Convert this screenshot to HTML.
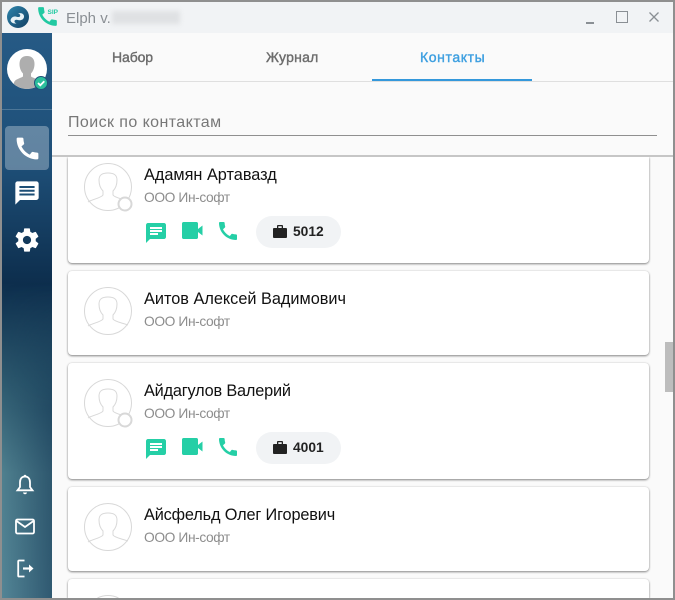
<!DOCTYPE html>
<html><head><meta charset="utf-8">
<style>
*{box-sizing:border-box}
html,body{margin:0;padding:0;width:675px;height:600px;overflow:hidden;background:#8f8f8f;font-family:"Liberation Sans",sans-serif}
.abs{position:absolute}
#win{position:absolute;left:2px;top:2px;width:671px;height:596px;overflow:hidden;background:#fafafa}
.t{position:absolute;white-space:nowrap}
.tab{font-size:14px;-webkit-text-stroke:.4px currentColor;color:#6c6c6c;top:47px}
.card{position:absolute;left:66px;width:581px;background:#fff;border-radius:4px;box-shadow:0 1px 2px rgba(0,0,0,.45),0 0 2px rgba(0,0,0,.1);overflow:hidden}
.name{position:absolute;left:76px;font-size:16.3px;color:#111;white-space:nowrap}
.org{position:absolute;left:76px;font-size:13.8px;letter-spacing:-.4px;color:#8d8d8d;white-space:nowrap}
.pill{position:absolute;left:188px;width:85px;height:32px;border-radius:16px;background:#f1f3f5;font-size:13.8px;font-weight:bold;color:#222}
</style></head><body>
<div id="win">
<!-- title bar -->
<div class="abs" style="left:0;top:0;width:671px;height:31px;background:#f1f3f5"></div>
<svg class="abs" style="left:5px;top:4px" width="22" height="22" viewBox="0 0 22 22"><defs><linearGradient id="lg" x1="0" y1="0" x2="1" y2="1"><stop offset="0" stop-color="#2f86ad"/><stop offset="1" stop-color="#123f63"/></linearGradient></defs><circle cx="11" cy="11" r="11" fill="url(#lg)"/><path d="M3.500 14.500c.5-3.500 3.500-4.500 6-3.800 2 .6 3.500.3 3.700-1 .2-1.200-.8-2-2.200-2 3-1.500 6.500.3 6 3.300-.4 2.800-3.500 3.800-6 3-1.800-.6-3.300-.2-3.500 1-.2 1.200.7 2 2 2.200-2.500 1-6.200-.6-6-3.700z" fill="#e8f2f6"/></svg>
<svg class="abs" style="left:33px;top:2px" width="25" height="25" viewBox="0 0 25 25"><path transform="scale(1.04)" d="M20.010 15.380c-1.230 0-2.420-.2-3.530-.56-.35-.12-.74-.03-1.010.24l-1.570 1.970c-2.830-1.350-5.480-3.900-6.890-6.830l1.950-1.660c.27-.28.35-.67.24-1.020-.37-1.110-.56-2.300-.56-3.530 0-.54-.45-.99-.99-.99H4.190C3.650 3 3 3.240 3 3.990 3 13.280 10.730 21 20.010 21c.71 0 .99-.63.99-1.180v-3.450c0-.54-.45-.99-.99-.99z" fill="#22c9a2"/><text x="12.500" y="10" font-family="Liberation Sans" font-size="6.500" font-weight="bold" fill="#22c9a2">SIP</text></svg>
<div class="t" style="left:64px;top:8px;font-size:15px;color:#8a8f94">Elph v.</div>
<div class="abs" style="left:110px;top:9px;width:68px;height:13px;background:#dfe1e3;filter:blur(2.500px)"></div>
<div class="abs" style="left:584px;top:20px;width:8px;height:1.500px;background:#8a8f94"></div>
<div class="abs" style="left:614px;top:9px;width:12px;height:12px;border:1.500px solid #8a8f94"></div>
<svg class="abs" style="left:647px;top:10px" width="10" height="10" viewBox="0 0 10 10"><path d="M.5.500l9 9M9.500.500l-9 9" stroke="#8a8f94" stroke-width="1.300" fill="none"/></svg>

<!-- sidebar -->
<div class="abs" style="left:0;top:31px;width:50px;height:565px;background:linear-gradient(180deg,#265a85 0,#1e4f78 130px,#0d2e4d 250px,#2d5a6f 350px,#4f808f 440px,#538596 565px)"></div>
<div class="abs" style="left:0;top:281px;width:50px;height:315px;background:linear-gradient(90deg,rgba(13,46,77,0),rgba(13,46,77,.5));-webkit-mask-image:linear-gradient(180deg,transparent,#000 40%)"></div>
<div class="abs" style="left:0;top:107px;width:50px;height:1px;background:rgba(255,255,255,.2)"></div>
<!-- avatar -->
<svg class="abs" style="left:5px;top:47px" width="42" height="42" viewBox="0 0 42 42"><defs><clipPath id="cc"><circle cx="20" cy="20" r="20"/></clipPath></defs><circle cx="20" cy="20" r="20" fill="#fff"/><g clip-path="url(#cc)"><path d="M20 7c-5 0-7.500 3-7.500 8 0 4 1.500 7.500 3.500 9.500v3c-3 2-8 2.500-9 6l-1 8h28l-1-8c-1-3.500-6-4-9-6v-3c2-2 3.500-5.500 3.500-9.500 0-5-2.500-8-7.500-8z" fill="#aeaeae"/></g><circle cx="34" cy="34" r="6.500" fill="#2bbf9c" stroke="#1f5278" stroke-width="1"/><path d="M31 34l2.300 2.300 4-4" stroke="#fff" stroke-width="1.800" fill="none"/></svg>
<!-- nav -->
<div class="abs" style="left:3px;top:124px;width:44px;height:44px;border-radius:4px;background:rgba(255,255,255,.3)"></div>
<svg class="abs" style="left:11px;top:132px" width="29" height="29" viewBox="0 0 24 24"><path d="M20.010 15.380c-1.230 0-2.420-.2-3.530-.56-.35-.12-.74-.03-1.010.24l-1.570 1.970c-2.830-1.350-5.480-3.900-6.890-6.830l1.950-1.660c.27-.28.35-.67.24-1.020-.37-1.110-.56-2.300-.56-3.530 0-.54-.45-.99-.99-.99H4.190C3.650 3 3 3.240 3 3.990 3 13.280 10.730 21 20.010 21c.71 0 .99-.63.99-1.180v-3.450c0-.54-.45-.99-.99-.99z" fill="#fff"/></svg>
<svg class="abs" style="left:11px;top:177px" width="28" height="28" viewBox="0 0 24 24"><path d="M20 2H4c-1.100 0-1.990.9-1.990 2L2 22l4-4h14c1.100 0 2-.9 2-2V4c0-1.100-.9-2-2-2z" fill="#fff"/><path d="M5.500 6h13v1.700h-13zM5.500 9.200h13v1.700h-13zM5.500 12.400h13v1.700h-13z" fill="#1d4f76"/></svg>
<svg class="abs" style="left:11px;top:224px" width="28" height="28" viewBox="0 0 24 24"><path d="M19.430 12.980c.04-.32.07-.64.07-.98s-.03-.66-.07-.98l2.110-1.650c.19-.15.24-.42.12-.64l-2-3.460c-.12-.22-.39-.3-.61-.22l-2.490 1c-.52-.4-1.080-.73-1.690-.98l-.38-2.650C14.460 2.180 14.250 2 14 2h-4c-.25 0-.46.18-.49.420l-.38 2.650c-.61.25-1.170.59-1.690.98l-2.490-1c-.23-.09-.49 0-.61.220l-2 3.460c-.13.220-.07.490.12.640l2.110 1.650c-.04.32-.07.650-.07.980s.03.660.07.980l-2.110 1.650c-.19.150-.24.420-.12.640l2 3.460c.12.220.39.300.61.220l2.490-1c.52.400 1.080.730 1.690.980l.38 2.650c.03.240.24.420.49.420h4c.25 0 .46-.18.49-.42l.38-2.650c.61-.25 1.170-.59 1.690-.98l2.490 1c.23.090.49 0 .61-.22l2-3.460c.12-.22.070-.49-.12-.64l-2.110-1.650zM12 15.500c-1.930 0-3.500-1.570-3.500-3.500s1.570-3.500 3.500-3.500 3.500 1.570 3.500 3.500-1.570 3.500-3.500 3.500z" fill="#fff"/></svg>
<svg class="abs" style="left:13px;top:471px" width="20" height="24" viewBox="0 0 20 24"><path d="M10 3.500c-3.300 0-5 2.500-5 6v4.500l-2.500 3.300h15L15 14V9.500c0-3.500-1.700-6-5-6z" fill="none" stroke="#fff" stroke-width="1.800"/><circle cx="10" cy="3" r="1.300" fill="#fff"/><path d="M8 19.500h4c0 1-1 1.700-2 1.700s-2-.7-2-1.700z" fill="#fff"/></svg>
<svg class="abs" style="left:13px;top:516px" width="22" height="18" viewBox="0 0 22 18"><rect x="1" y="1.500" width="18" height="14" rx="1.500" fill="none" stroke="#fff" stroke-width="1.800"/><path d="M1.500 3l8.500 6 8.500-6" fill="none" stroke="#fff" stroke-width="1.800"/></svg>
<svg class="abs" style="left:14px;top:557px" width="20" height="20" viewBox="0 0 20 20"><path d="M8.500 1.500H3a.8.8 0 0 0-.8.800v14.400a.8.8 0 0 0 .8.800h5.500" fill="none" stroke="#fff" stroke-width="1.800"/><path d="M7 9.500h8" stroke="#fff" stroke-width="2.200"/><path d="M13 5.500l4.500 4-4.500 4z" fill="#fff"/></svg>

<!-- tabs -->
<div class="abs" style="left:50px;top:79px;width:621px;height:1px;background:#dfdfdf"></div>
<div class="t tab" style="left:110px;letter-spacing:-.1px">Набор</div>
<div class="t tab" style="left:264px;letter-spacing:.25px">Журнал</div>
<div class="t tab" style="left:418px;letter-spacing:.6px;color:#3d9fe0">Контакты</div>
<div class="abs" style="left:370px;top:77px;width:160px;height:2px;background:#3498db"></div>
<!-- search -->
<div class="t" style="left:66px;top:112px;font-size:16px;letter-spacing:.42px;color:#777">Поиск по контактам</div>
<div class="abs" style="left:66px;top:133px;width:589px;height:1px;background:#8f8f8f"></div>

<!-- list -->
<div class="abs" style="left:0;top:155px;width:671px;height:441px;overflow:hidden" id="list">
<div class="card" style="left:66px;top:0;height:106px;border-radius:0 0 4px 4px">
<svg class="abs" style="left:16px;top:6px" width="50" height="50" viewBox="0 0 50 50"><circle cx="24" cy="24" r="23.500" fill="#fff" stroke="#d8d8d8"/><path d="M4 39C9 36 17 35 19 32V28C16 25 15 21 15 17 15 12 18 10 24 10S33 12 33 17C33 21 32 25 29 28V32C31 35 39 36 44 38" fill="none" stroke="#d8d8d8"/><circle cx="41" cy="41" r="6.500" fill="#fff" stroke="#d8d8d8" stroke-width="2"/></svg>
<div class="name" style="top:9px">Адамян Артавазд</div>
<div class="org" style="top:33px">ООО Ин-софт</div>
<svg class="abs" style="left:76px;top:64px" width="24" height="24" viewBox="0 0 24 24"><path d="M20 2H4c-1.100 0-1.990.9-1.990 2L2 22l4-4h14c1.100 0 2-.9 2-2V4c0-1.100-.9-2-2-2zM6 9h12v2H6V9zm8 5H6v-2h8v2zm4-6H6V6h12v2z" fill="#25cfa6"/></svg>
<svg class="abs" style="left:114px;top:64px" width="22" height="19" viewBox="0 0 22 19"><path d="M1.500 1h13c.8 0 1.500.7 1.500 1.500v14c0 .8-.7 1.500-1.500 1.500h-13C.7 18 0 17.300 0 16.500v-14C0 1.700.7 1 1.500 1z" fill="#25cfa6"/><path d="M16 8l4.500-3.500v10L16 11z" fill="#25cfa6"/></svg>
<svg class="abs" style="left:148px;top:62px" width="24" height="24" viewBox="0 0 24 24"><path d="M20.010 15.380c-1.230 0-2.420-.2-3.530-.56-.35-.12-.74-.03-1.010.24l-1.570 1.970c-2.830-1.350-5.480-3.900-6.890-6.830l1.950-1.660c.27-.28.35-.67.24-1.020-.37-1.110-.56-2.300-.56-3.530 0-.54-.45-.99-.99-.99H4.190C3.650 3 3 3.240 3 3.990 3 13.280 10.730 21 20.010 21c.71 0 .99-.63.99-1.180v-3.450c0-.54-.45-.99-.99-.99z" fill="#25cfa6"/></svg>
<div class="pill" style="top:59px"><svg class="abs" style="left:17px;top:9px" width="14" height="13" viewBox="0 0 14 13"><path d="M5 0h4c.6 0 1 .4 1 1v2h3c.6 0 1 .4 1 1v8c0 .6-.4 1-1 1H1c-.6 0-1-.4-1-1V4c0-.6.4-1 1-1h3V1c0-.6.4-1 1-1zm.3 1.300V3h3.400V1.300z" fill="#222" fill-rule="evenodd"/></svg><span class="abs" style="left:37px;top:8px">5012</span></div>
</div>

<div class="card" style="left:66px;top:114px;height:84px">
<svg class="abs" style="left:16px;top:16px" width="50" height="50" viewBox="0 0 50 50"><circle cx="24" cy="24" r="23.500" fill="#fff" stroke="#d8d8d8"/><path d="M4 39C9 36 17 35 19 32V28C16 25 15 21 15 17 15 12 18 10 24 10S33 12 33 17C33 21 32 25 29 28V32C31 35 39 36 44 38" fill="none" stroke="#d8d8d8"/></svg>
<div class="name" style="top:19px">Аитов Алексей Вадимович</div>
<div class="org" style="top:43px">ООО Ин-софт</div>
</div>

<div class="card" style="left:66px;top:206px;height:116px">
<svg class="abs" style="left:16px;top:16px" width="50" height="50" viewBox="0 0 50 50"><circle cx="24" cy="24" r="23.500" fill="#fff" stroke="#d8d8d8"/><path d="M4 39C9 36 17 35 19 32V28C16 25 15 21 15 17 15 12 18 10 24 10S33 12 33 17C33 21 32 25 29 28V32C31 35 39 36 44 38" fill="none" stroke="#d8d8d8"/><circle cx="41" cy="41" r="6.500" fill="#fff" stroke="#d8d8d8" stroke-width="2"/></svg>
<div class="name" style="top:19px;letter-spacing:-.18px">Айдагулов Валерий</div>
<div class="org" style="top:43px">ООО Ин-софт</div>
<svg class="abs" style="left:76px;top:74px" width="24" height="24" viewBox="0 0 24 24"><path d="M20 2H4c-1.100 0-1.990.9-1.990 2L2 22l4-4h14c1.100 0 2-.9 2-2V4c0-1.100-.9-2-2-2zM6 9h12v2H6V9zm8 5H6v-2h8v2zm4-6H6V6h12v2z" fill="#25cfa6"/></svg>
<svg class="abs" style="left:114px;top:74px" width="22" height="19" viewBox="0 0 22 19"><path d="M1.500 1h13c.8 0 1.500.7 1.500 1.500v14c0 .8-.7 1.500-1.500 1.500h-13C.7 18 0 17.300 0 16.500v-14C0 1.700.7 1 1.500 1z" fill="#25cfa6"/><path d="M16 8l4.500-3.500v10L16 11z" fill="#25cfa6"/></svg>
<svg class="abs" style="left:148px;top:72px" width="24" height="24" viewBox="0 0 24 24"><path d="M20.010 15.380c-1.230 0-2.420-.2-3.530-.56-.35-.12-.74-.03-1.010.24l-1.570 1.970c-2.830-1.350-5.480-3.900-6.890-6.830l1.950-1.660c.27-.28.35-.67.24-1.020-.37-1.110-.56-2.300-.56-3.530 0-.54-.45-.99-.99-.99H4.190C3.650 3 3 3.240 3 3.990 3 13.280 10.730 21 20.010 21c.71 0 .99-.63.99-1.180v-3.450c0-.54-.45-.99-.99-.99z" fill="#25cfa6"/></svg>
<div class="pill" style="top:69px"><svg class="abs" style="left:17px;top:9px" width="14" height="13" viewBox="0 0 14 13"><path d="M5 0h4c.6 0 1 .4 1 1v2h3c.6 0 1 .4 1 1v8c0 .6-.4 1-1 1H1c-.6 0-1-.4-1-1V4c0-.6.4-1 1-1h3V1c0-.6.4-1 1-1zm.3 1.300V3h3.400V1.300z" fill="#222" fill-rule="evenodd"/></svg><span class="abs" style="left:37px;top:8px">4001</span></div>
</div>

<div class="card" style="left:66px;top:330px;height:84px">
<svg class="abs" style="left:16px;top:16px" width="50" height="50" viewBox="0 0 50 50"><circle cx="24" cy="24" r="23.500" fill="#fff" stroke="#d8d8d8"/><path d="M4 39C9 36 17 35 19 32V28C16 25 15 21 15 17 15 12 18 10 24 10S33 12 33 17C33 21 32 25 29 28V32C31 35 39 36 44 38" fill="none" stroke="#d8d8d8"/></svg>
<div class="name" style="top:19px;letter-spacing:-.14px">Айсфельд Олег Игоревич</div>
<div class="org" style="top:43px">ООО Ин-софт</div>
</div>

<div class="card" style="left:66px;top:422px;height:19px;border-radius:4px 4px 0 0">
<svg class="abs" style="left:16px;top:16px" width="48" height="3" viewBox="0 0 48 3"><path d="M13.500 3A23.500 23.500 0 0 1 34.500 3" fill="none" stroke="#d8d8d8"/></svg>
</div>
</div>

<!-- header/list separator -->
<div class="abs" style="left:50px;top:153px;width:621px;height:2px;background:#c6c6c6"></div>
<!-- scrollbar -->
<div class="abs" style="left:663px;top:340px;width:8px;height:50px;background:#bdbdbd"></div>
</div>
</body></html>
